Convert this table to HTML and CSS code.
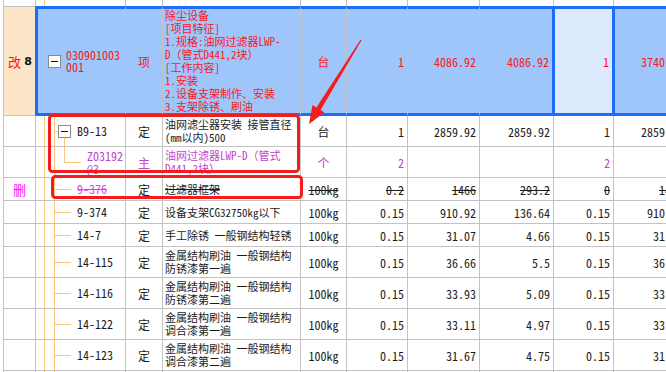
FILE: index.html
```html
<!DOCTYPE html>
<html lang="zh-CN">
<head>
<meta charset="utf-8">
<link rel="stylesheet" href="styles.css">
</head>
<body>
<div class="sheet">
  <div class="grid">
    <!-- row 0 (partial) -->
    <div class="c mk r0"></div><div class="c cd r0 t0"></div><div class="c r0"></div><div class="c r0"></div><div class="c r0"></div><div class="c r0"></div><div class="c r0"></div><div class="c r0"></div><div class="c r0"></div><div class="c r0"></div>

    <!-- row 1 selected -->
    <div class="c mk s1"><span class="gai">改</span><b class="no">8</b></div>
    <div class="c cd sel t1 red"><span class="tg"></span><span class="code">030901003<br>001</span></div>
    <div class="c ty sel red">项</div>
    <div class="c nm sel red">除尘设备<br>[项目特征]<br>1.规格:油网过滤器LWP-<br>D（管式D441,2块）<br>[工作内容]<br>1.安装<br>2.设备支架制作、安装<br>3.支架除锈、刷油</div>
    <div class="c un sel red">台</div>
    <div class="c n sel red">1</div>
    <div class="c n sel red">4086.92</div>
    <div class="c n sel red pre">4086.92</div>
    <div class="c n cur red">1</div>
    <div class="c n sel red post">3740.45</div>

    <!-- B9-13 -->
    <div class="c mk"></div>
    <div class="c cd t2"><span class="tg"></span><span class="code">B9-13</span></div>
    <div class="c ty">定</div>
    <div class="c nm">油网滤尘器安装 接管直径<br>(mm以内)500</div>
    <div class="c un">台</div>
    <div class="c n">1</div>
    <div class="c n">2859.92</div>
    <div class="c n">2859.92</div>
    <div class="c n">1</div>
    <div class="c n">2859.92</div>

    <!-- Z03192@3 -->
    <div class="c mk"></div>
    <div class="c cd t3 pur"><span class="code">Z03192<br>@3</span></div>
    <div class="c ty pur">主</div>
    <div class="c nm pur">油网过滤器LWP-D（管式<br>D441,2块）</div>
    <div class="c un pur">个</div>
    <div class="c n pur">2</div>
    <div class="c n"></div>
    <div class="c n"></div>
    <div class="c n pur">2</div>
    <div class="c n"></div>

    <!-- 9-376 deleted -->
    <div class="c mk"><span class="del">删</span></div>
    <div class="c cd t4 mag"><span class="code st">9-376</span></div>
    <div class="c ty">定</div>
    <div class="c nm"><span class="st">过滤器框架</span></div>
    <div class="c un"><span class="st">100kg</span></div>
    <div class="c n"><span class="st">0.2</span></div>
    <div class="c n"><span class="st">1466</span></div>
    <div class="c n"><span class="st">293.2</span></div>
    <div class="c n"><span class="st">0</span></div>
    <div class="c n"><span class="st">1466</span></div>

    <!-- 9-374 -->
    <div class="c mk"></div>
    <div class="c cd t4"><span class="code">9-374</span></div>
    <div class="c ty">定</div>
    <div class="c nm">设备支架CG32750kg以下</div>
    <div class="c un">100kg</div>
    <div class="c n">0.15</div>
    <div class="c n">910.92</div>
    <div class="c n">136.64</div>
    <div class="c n">0.15</div>
    <div class="c n">910.92</div>

    <!-- 14-7 -->
    <div class="c mk"></div>
    <div class="c cd t4"><span class="code">14-7</span></div>
    <div class="c ty">定</div>
    <div class="c nm">手工除锈 一般钢结构轻锈</div>
    <div class="c un">100kg</div>
    <div class="c n">0.15</div>
    <div class="c n">31.07</div>
    <div class="c n">4.66</div>
    <div class="c n">0.15</div>
    <div class="c n">31.07</div>

    <!-- 14-115 -->
    <div class="c mk"></div>
    <div class="c cd t4"><span class="code">14-115</span></div>
    <div class="c ty">定</div>
    <div class="c nm">金属结构刷油 一般钢结构<br>防锈漆第一遍</div>
    <div class="c un">100kg</div>
    <div class="c n">0.15</div>
    <div class="c n">36.66</div>
    <div class="c n">5.5</div>
    <div class="c n">0.15</div>
    <div class="c n">36.66</div>

    <!-- 14-116 -->
    <div class="c mk"></div>
    <div class="c cd t4"><span class="code">14-116</span></div>
    <div class="c ty">定</div>
    <div class="c nm">金属结构刷油 一般钢结构<br>防锈漆第二遍</div>
    <div class="c un">100kg</div>
    <div class="c n">0.15</div>
    <div class="c n">33.93</div>
    <div class="c n">5.09</div>
    <div class="c n">0.15</div>
    <div class="c n">33.93</div>

    <!-- 14-122 -->
    <div class="c mk"></div>
    <div class="c cd t4"><span class="code">14-122</span></div>
    <div class="c ty">定</div>
    <div class="c nm">金属结构刷油 一般钢结构<br>调合漆第一遍</div>
    <div class="c un">100kg</div>
    <div class="c n">0.15</div>
    <div class="c n">33.11</div>
    <div class="c n">4.97</div>
    <div class="c n">0.15</div>
    <div class="c n">33.11</div>

    <!-- 14-123 -->
    <div class="c mk"></div>
    <div class="c cd t4"><span class="code">14-123</span></div>
    <div class="c ty">定</div>
    <div class="c nm">金属结构刷油 一般钢结构<br>调合漆第二遍</div>
    <div class="c un">100kg</div>
    <div class="c n">0.15</div>
    <div class="c n">31.67</div>
    <div class="c n">4.75</div>
    <div class="c n">0.15</div>
    <div class="c n">31.67</div>

    <!-- partial last row -->
    <div class="c mk"></div><div class="c cd t5"></div><div class="c"></div><div class="c"></div><div class="c"></div><div class="c"></div><div class="c"></div><div class="c"></div><div class="c"></div><div class="c"></div>
  </div>

  <svg class="marks" width="666" height="372" viewBox="0 0 666 372" aria-hidden="true">
    <rect x="49.5" y="115.5" width="249" height="56" rx="3" ry="3" fill="none" stroke="#f41c1c" stroke-width="3"/>
    <rect x="52.5" y="176.5" width="249" height="21" rx="3" ry="3" fill="none" stroke="#f41c1c" stroke-width="3"/>
    <polygon points="360.5,39.7 361.5,40.3 320.6,110 324.4,112.4 309,124 312.5,105 316.4,107.4" fill="#f41c1c"/>
  </svg>
</div>
</body>
</html>
```

FILE: styles.css
```css
:root {
  --line: #c3c3c3;
  --blue: #1a6ef8;
  --tree: linear-gradient(#fcc57a, #fcc57a);
}

body {
  margin: 0;
  width: 666px;
  height: 372px;
  overflow: hidden;
  background: #fff;
  color: #1c1c1c;
  font-family: "Noto Sans Mono CJK SC", "Noto Sans CJK SC", "DejaVu Sans Mono", monospace;
}

.sheet {
  position: relative;
  width: 666px;
  height: 372px;
  overflow: hidden;
}

.grid {
  display: grid;
  grid-template-columns: 32px 90px 37px 138px 46px 61px 72px 74px 60px 73px;
  grid-template-rows: 6px 110px 31px 31px 23px 23px 23px 31px 31px 31px 31px 20px;
  width: max-content;
  margin-left: 3px;
  border-left: 1px solid var(--line);
}

.c {
  box-sizing: border-box;
  display: flex;
  align-items: center;
  overflow: hidden;
  white-space: nowrap;
  border-right: 1px solid var(--line);
  border-bottom: 1px solid var(--line);
  font-size: 12px;
  line-height: 13px;
}

.r0 { border-bottom: none; }

.mk {
  justify-content: space-between;
  padding: 0 3px 0 4px;
}
.s1 {
  background: #fde6c8;
  border-top: 1px solid var(--line);
  border-right-color: var(--blue);
}
.gai {
  color: #ff1010;
  font-size: 13px;
  font-family: "Noto Sans CJK SC", sans-serif;
}
.no {
  font-family: "DejaVu Sans", sans-serif;
  font-size: 11px;
  font-weight: bold;
  color: #111;
}
.del {
  color: #ff10ff;
  font-size: 13px;
  padding-left: 5px;
  font-family: "Noto Sans CJK SC", sans-serif;
}

/* tree column */
.cd {
  background-origin: border-box;
  background-repeat: no-repeat;
}
.code { line-height: 12px; }
.t0 { background: var(--tree) 8px 0 / 1px 100% no-repeat; }
.t1 {
  padding-left: 10px;
  background:
    var(--tree) 8px 0 / 1px 100% no-repeat,
    var(--tree) 8px 50% / 5px 1px no-repeat,
    var(--tree) 18px 100% / 1px calc(50% - 7px) no-repeat,
    #9ec6fa;
  background-origin: border-box;
}
.t1 .code { margin-left: 5px; }
.t2 {
  padding-left: 22px;
  background:
    var(--tree) 8px 0 / 1px 100% no-repeat,
    var(--tree) 18px 0 / 1px 100% no-repeat,
    var(--tree) 18px 50% / 5px 1px no-repeat,
    var(--tree) 28px 100% / 1px calc(50% - 6px) no-repeat;
  background-origin: border-box;
}
.t2 .code { margin-left: 6px; }
.t3 {
  padding-left: 51px;
  background:
    var(--tree) 8px 0 / 1px 100% no-repeat,
    var(--tree) 18px 0 / 1px 100% no-repeat,
    var(--tree) 28px 0 / 1px 50% no-repeat,
    var(--tree) 28px 50% / 17px 1px no-repeat;
  background-origin: border-box;
}
.t3 .code { line-height: 13px; }
.t4 {
  padding-left: 41px;
  background:
    var(--tree) 8px 0 / 1px 100% no-repeat,
    var(--tree) 18px 0 / 1px 100% no-repeat,
    var(--tree) 19px 50% / 16px 1px no-repeat;
  background-origin: border-box;
}
.t5 {
  background:
    var(--tree) 8px 0 / 1px 100% no-repeat,
    var(--tree) 18px 0 / 1px 100% no-repeat;
  background-origin: border-box;
}

.tg {
  box-sizing: border-box;
  flex: none;
  width: 13px;
  height: 13px;
  border: 1px solid #8a8a8a;
  background: #fff;
  display: flex;
  align-items: center;
  justify-content: center;
}
.tg::before {
  content: "";
  width: 7px;
  height: 1px;
  background: #111;
}

.ty, .un { justify-content: center; }
.ty { font-size: 12px; }
.nm {
  padding-left: 2px;
  font-size: 11px;
  line-height: 13px;
}
.n {
  justify-content: flex-end;
  padding-right: 3px;
}

/* selection */
.sel {
  background: #9ec6fa;
  border-top: 3px solid var(--blue);
  border-bottom: 3px solid var(--blue);
}
.cd.sel { border-left: 2px solid var(--blue); }
.pre { border-right: 2px solid var(--blue); }
.cur {
  background: #dde9fd;
  border-top: 3px solid var(--blue);
  border-bottom: 3px solid var(--blue);
  border-left: 1px solid var(--blue);
  border-right: 2px solid var(--blue);
}
.post { border-left: 1px solid var(--blue); }

.red { color: #f51a1a; }
.pur { color: #bf45cc; }
.mag { color: #e83ce8; }
.st { text-decoration: line-through; }

.marks {
  position: absolute;
  left: 0;
  top: 0;
  pointer-events: none;
}
```
